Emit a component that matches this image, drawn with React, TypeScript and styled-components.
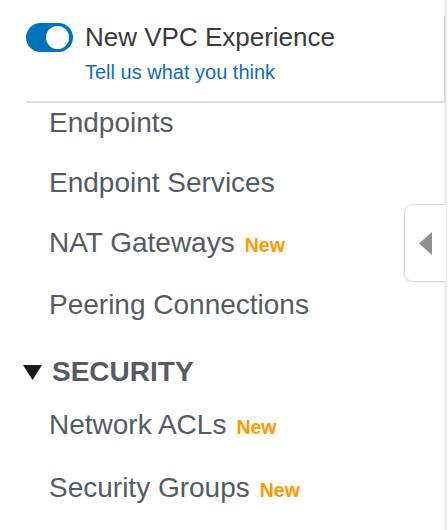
import React from "react";
import styled, { createGlobalStyle } from "styled-components";

const GlobalStyle = createGlobalStyle`
  html, body { margin: 0; padding: 0; background: #ffffff; }
  body { font-family: "Liberation Sans", Arial, Helvetica, sans-serif; }
  * { box-sizing: border-box; }
`;

const Page = styled.div`
  position: relative;
  width: 448px;
  height: 530px;
  overflow: hidden;
  background: #ffffff;
`;

const Sidebar = styled.aside`
  width: 447px;
  height: 530px;
  border-right: 3px solid #efefef;
  display: flex;
  flex-direction: column;
`;

const HeaderBox = styled.header`
  margin: 16px -2px 0 26px;
  padding: 7px 0 17px 0;
  border-right: 2px solid #dcdcdc;
  border-bottom: 2px solid #dcdcdc;
  display: flex;
  flex-direction: column;
`;

const TitleRow = styled.div`
  display: flex;
  align-items: center;
  gap: 12px;
`;

const Toggle = styled.span`
  position: relative;
  display: inline-block;
  width: 47px;
  height: 29px;
  border-radius: 15px;
  background: #0073bb;
  flex-shrink: 0;
`;

const Knob = styled.span`
  position: absolute;
  top: 3px;
  right: 4px;
  width: 23px;
  height: 23px;
  border-radius: 50%;
  background: #ffffff;
`;

const Title = styled.span`
  font-size: 26px;
  line-height: 29px;
  color: #3a3a3a;
`;

const FeedbackLink = styled.a`
  margin: 8px 0 0 59px;
  font-size: 20px;
  line-height: 24px;
  color: #0f6cbd;
  text-decoration: none;
`;

const Nav = styled.nav`
  display: flex;
  flex-direction: column;
  gap: 28px;
  padding-top: 4px;
`;

const Item = styled.div`
  padding-left: 49px;
  font-size: 28px;
  line-height: 32px;
  color: #545b64;
  white-space: nowrap;
`;

const Badge = styled.span`
  margin-left: 10px;
  font-size: 19.5px;
  font-weight: 700;
  color: #ff9900;
`;

const Section = styled.div`
  margin-top: 7px;
  display: flex;
  flex-direction: column;
  gap: 21px;
`;

const SectionTitle = styled.div`
  display: flex;
  align-items: center;
  gap: 10px;
  padding-left: 23px;
  font-size: 28px;
  line-height: 32px;
  font-weight: 700;
  color: #545b64;
`;

const SubList = styled.div`
  display: flex;
  flex-direction: column;
  gap: 29px;
`;

const CollapseTab = styled.button`
  position: absolute;
  left: 404px;
  top: 204px;
  width: 42px;
  height: 78px;
  padding: 0 0 0 14px;
  border: 1px solid #dddddd;
  border-right: none;
  border-radius: 9px 0 0 9px;
  background: #ffffff;
  box-shadow: -1px 1px 2px rgba(0, 0, 0, 0.06);
  display: flex;
  align-items: center;
  cursor: pointer;
`;

const items = [
  { label: "Endpoints" },
  { label: "Endpoint Services" },
  { label: "NAT Gateways", isNew: true },
  { label: "Peering Connections" },
];

const securityItems = [
  { label: "Network ACLs", isNew: true },
  { label: "Security Groups", isNew: true },
];

export default function App() {
  return (
    <Page>
      <GlobalStyle />
      <Sidebar>
        <HeaderBox>
          <TitleRow>
            <Toggle>
              <Knob />
            </Toggle>
            <Title>New VPC Experience</Title>
          </TitleRow>
          <FeedbackLink href="#">Tell us what you think</FeedbackLink>
        </HeaderBox>
        <Nav>
          {items.map((it) => (
            <Item key={it.label}>
              {it.label}
              {it.isNew && <Badge>New</Badge>}
            </Item>
          ))}
          <Section>
            <SectionTitle>
              <svg width="19" height="15" viewBox="0 0 19 15">
                <polygon points="0,0 19,0 9.5,15" fill="#16191f" />
              </svg>
              SECURITY
            </SectionTitle>
            <SubList>
              {securityItems.map((it) => (
                <Item key={it.label}>
                  {it.label}
                  {it.isNew && <Badge>New</Badge>}
                </Item>
              ))}
            </SubList>
          </Section>
        </Nav>
      </Sidebar>
      <CollapseTab aria-label="Collapse">
        <svg width="13" height="23" viewBox="0 0 13 23">
          <polygon points="13,0 13,23 0,11.5" fill="#8f8f8f" />
        </svg>
      </CollapseTab>
    </Page>
  );
}
